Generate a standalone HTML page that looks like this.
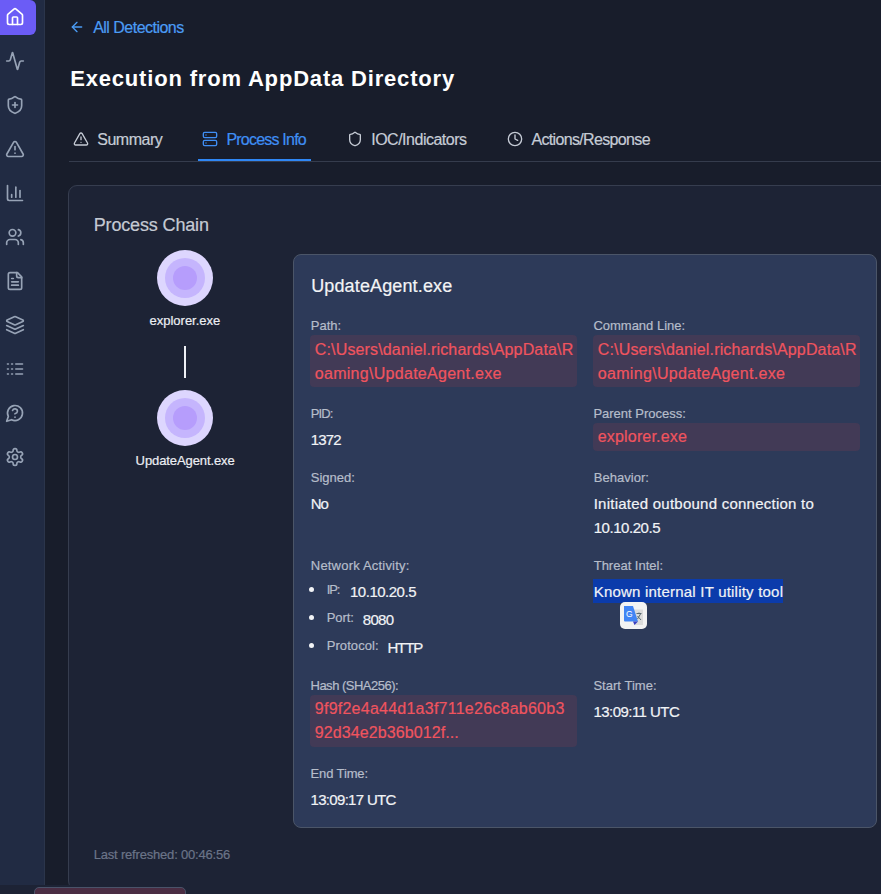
<!DOCTYPE html>
<html><head><meta charset="utf-8">
<style>
*{box-sizing:border-box;margin:0;padding:0}
html,body{width:881px;height:894px;overflow:hidden;background:#1d2335;font-family:"Liberation Sans",sans-serif}
.abs{position:absolute}
.t{position:absolute;white-space:pre;-webkit-text-stroke:0.2px currentColor}
svg.i{position:absolute;fill:none;stroke-linecap:round;stroke-linejoin:round}
#main{left:0;top:0;width:881px;height:885px;background:#181d2b}
#side{left:0;top:0;width:45px;height:885px;background:#212b43;border-right:1px solid #2b354b}
#home{left:0;top:0;width:36px;height:35px;background:#6b5cf6;border-radius:0 6px 6px 0}
svg.s{width:20px;height:20px;left:5px;stroke:#97a3b6;stroke-width:2}
#tabline{left:69px;top:161px;width:812px;height:1px;background:#353c4d}
#uline{left:198px;top:159px;width:113px;height:2px;background:#2f87f5}
#outer{left:68px;top:185px;width:840px;height:705px;background:#1d2335;border:1px solid #363d4f;border-radius:9px}
.node{position:absolute;left:157px;width:56px;height:56px;border-radius:50%;background:#ddd6fe}
.node i{position:absolute;left:8px;top:8px;width:40px;height:40px;border-radius:50%;background:#c5b5fd}
.node b{position:absolute;left:16px;top:16px;width:24px;height:24px;border-radius:50%;background:#b69dfc}
#conn{left:184px;top:346px;width:2px;height:32px;background:#eef0f5}
#inner{left:293px;top:254px;width:584px;height:574px;background:#2d3a59;border:1px solid #4b5568;border-radius:8px}
.box{position:absolute;background:#423a56;border-radius:4px}
.dot{position:absolute;left:309px;width:5px;height:5px;border-radius:50%;background:#f1f3f6}
#sel{left:593px;top:579px;width:190px;height:24px;background:#0b3bab}
#gt{left:620px;top:602px;width:27px;height:27px;background:#f3f3f3;border-radius:5px;overflow:hidden}
#strip{left:0;top:885px;width:881px;height:9px;background:#1d2335}
#toast{left:34px;top:887px;width:152px;height:20px;background:#4a2d43;border:1px solid #4a5369;border-radius:5px}
</style></head><body>
<div class="abs" id="main"></div>
<div class="abs" id="side"></div>
<div class="abs" id="home"></div>
<!-- sidebar icons -->
<svg class="i s" style="top:7px;stroke:#fff" viewBox="0 0 24 24"><path d="M15 21v-8a1 1 0 0 0-1-1h-4a1 1 0 0 0-1 1v8"/><path d="M3 10a2 2 0 0 1 .709-1.528l7-5.999a2 2 0 0 1 2.582 0l7 5.999A2 2 0 0 1 21 10v9a2 2 0 0 1-2 2H5a2 2 0 0 1-2-2z"/></svg>
<svg class="i s" style="top:51px" viewBox="0 0 24 24"><path d="M22 12h-2.48a2 2 0 0 0-1.93 1.46l-2.35 8.36a.25.25 0 0 1-.48 0L9.24 2.18a.25.25 0 0 0-.48 0l-2.350 8.36A2 2 0 0 1 4.49 12H2"/></svg>
<svg class="i s" style="top:95px" viewBox="0 0 24 24"><path d="M20 13c0 5-3.5 7.5-7.66 8.95a1 1 0 0 1-.67-.01C7.5 20.5 4 18 4 13V6a1 1 0 0 1 1-1c2 0 4.5-1.2 6.24-2.72a1.17 1.17 0 0 1 1.52 0C14.51 3.81 17 5 19 5a1 1 0 0 1 1 1z"/><path d="M9 12h6"/><path d="M12 9v6"/></svg>
<svg class="i s" style="top:139px" viewBox="0 0 24 24"><path d="m21.73 18-8-14a2 2 0 0 0-3.48 0l-8 14A2 2 0 0 0 4 21h16a2 2 0 0 0 1.73-3"/><path d="M12 9v4"/><path d="M12 17h.01"/></svg>
<svg class="i s" style="top:183px" viewBox="0 0 24 24"><path d="M3 3v16a2 2 0 0 0 2 2h16"/><path d="M18 17V9"/><path d="M13 17V5"/><path d="M8 17v-3"/></svg>
<svg class="i s" style="top:227px" viewBox="0 0 24 24"><path d="M16 21v-2a4 4 0 0 0-4-4H6a4 4 0 0 0-4 4v2"/><circle cx="9" cy="7" r="4"/><path d="M22 21v-2a4 4 0 0 0-3-3.87"/><path d="M16 3.13a4 4 0 0 1 0 7.75"/></svg>
<svg class="i s" style="top:271px" viewBox="0 0 24 24"><path d="M15 2H6a2 2 0 0 0-2 2v16a2 2 0 0 0 2 2h12a2 2 0 0 0 2-2V7Z"/><path d="M14 2v4a2 2 0 0 0 2 2h4"/><path d="M10 9H8"/><path d="M16 13H8"/><path d="M16 17H8"/></svg>
<svg class="i s" style="top:315px" viewBox="0 0 24 24"><path d="M12.83 2.18a2 2 0 0 0-1.66 0L2.6 6.08a1 1 0 0 0 0 1.83l8.58 3.91a2 2 0 0 0 1.66 0l8.58-3.9a1 1 0 0 0 0-1.83Z"/><path d="m22 17.65-9.17 4.16a2 2 0 0 1-1.66 0L2 17.65"/><path d="m22 12.65-9.170 4.16a2 2 0 0 1-1.66 0L2 12.65"/></svg>
<svg class="i s" style="top:359px" viewBox="0 0 24 24"><path d="M13 12h8"/><path d="M13 18h8"/><path d="M13 6h8"/><path d="M3 12h1"/><path d="M3 18h1"/><path d="M3 6h1"/><path d="M8 12h1"/><path d="M8 18h1"/><path d="M8 6h1"/></svg>
<svg class="i s" style="top:403px" viewBox="0 0 24 24"><path d="M7.9 20A9 9 0 1 0 4 16.1L2 22Z"/><path d="M9.09 9a3 3 0 0 1 5.83 1c0 2-3 3-3 3"/><path d="M12 17h.01"/></svg>
<svg class="i s" style="top:447px" viewBox="0 0 24 24"><path d="M12.22 2h-.44a2 2 0 0 0-2 2v.18a2 2 0 0 1-1 1.73l-.43.25a2 2 0 0 1-2 0l-.15-.08a2 2 0 0 0-2.73.73l-.22.38a2 2 0 0 0 .73 2.73l.15.1a2 2 0 0 1 1 1.72v.51a2 2 0 0 1-1 1.74l-.15.09a2 2 0 0 0-.73 2.73l.22.38a2 2 0 0 0 2.730.73l.15-.08a2 2 0 0 1 2 0l.43.25a2 2 0 0 1 1 1.73V20a2 2 0 0 0 2 2h.44a2 2 0 0 0 2-2v-.18a2 2 0 0 1 1-1.73l.43-.25a2 2 0 0 1 2 0l.15.08a2 2 0 0 0 2.73-.73l.22-.39a2 2 0 0 0-.73-2.73l-.15-.08a2 2 0 0 1-1-1.74v-.5a2 2 0 0 1 1-1.74l.15-.09a2 2 0 0 0 .73-2.73l-.22-.38a2 2 0 0 0-2.73-.73l-.15.08a2 2 0 0 1-2 0l-.43-.25a2 2 0 0 1-1-1.73V4a2 2 0 0 0-2-2z"/><circle cx="12" cy="12" r="3"/></svg>

<!-- back arrow -->
<svg class="i" style="left:69px;top:19px;width:16px;height:16px;stroke:#4b9cf5;stroke-width:2" viewBox="0 0 24 24"><path d="m12 19-7-7 7-7"/><path d="M19 12H5"/></svg>
<!-- tabs -->
<div class="abs" id="tabline"></div>
<div class="abs" id="uline"></div>
<svg class="i" style="left:73px;top:131px;width:16px;height:16px;stroke:#c6ccd6;stroke-width:2" viewBox="0 0 24 24"><path d="m21.73 18-8-14a2 2 0 0 0-3.48 0l-8 14A2 2 0 0 0 4 21h16a2 2 0 0 0 1.73-3"/><path d="M12 9v4"/><path d="M12 17h.01"/></svg>
<svg class="i" style="left:202px;top:131px;width:16px;height:16px;stroke:#3f8ff5;stroke-width:2" viewBox="0 0 24 24"><rect width="20" height="8" x="2" y="2" rx="2" ry="2"/><rect width="20" height="8" x="2" y="14" rx="2" ry="2"/><line x1="6" x2="6.01" y1="6" y2="6"/><line x1="6" x2="6.01" y1="18" y2="18"/></svg>
<svg class="i" style="left:347px;top:131px;width:16px;height:16px;stroke:#c6ccd6;stroke-width:2" viewBox="0 0 24 24"><path d="M20 13c0 5-3.5 7.5-7.66 8.95a1 1 0 0 1-.67-.01C7.5 20.5 4 18 4 13V6a1 1 0 0 1 1-1c2 0 4.5-1.2 6.24-2.72a1.17 1.17 0 0 1 1.52 0C14.51 3.81 17 5 19 5a1 1 0 0 1 1 1z"/></svg>
<svg class="i" style="left:507px;top:131px;width:16px;height:16px;stroke:#c6ccd6;stroke-width:2" viewBox="0 0 24 24"><circle cx="12" cy="12" r="10"/><polyline points="12 6 12 12 16 14"/></svg>

<div class="abs" id="outer"></div>
<div class="node" style="top:250px"><i></i><b></b></div>
<div class="abs" id="conn"></div>
<div class="node" style="top:390px"><i></i><b></b></div>

<div class="abs" id="inner"></div>
<div class="box" style="left:310px;top:335px;width:267px;height:52px"></div>
<div class="box" style="left:593px;top:335px;width:267px;height:52px"></div>
<div class="box" style="left:593px;top:423px;width:267px;height:28px"></div>
<div class="box" style="left:310px;top:695px;width:267px;height:52px"></div>
<div class="dot" style="top:587px"></div>
<div class="dot" style="top:615px"></div>
<div class="dot" style="top:643px"></div>
<div class="abs" id="sel"></div>
<div class="abs" id="gt">
  <svg width="27" height="27" viewBox="0 0 27 27" style="position:absolute;left:0;top:0">
    <rect x="14" y="7.5" width="9" height="15.5" fill="#dcdcdc"/>
    <path d="M4 4h9l5 15.5H5a1 1 0 0 1-1-1z" fill="#4285f4"/>
    <path d="M13 19.5h5l-3.5 3.5z" fill="#3a3fc2"/>
    <text x="9.4" y="15" font-family="Liberation Sans" font-size="8.5" fill="#fff" text-anchor="middle">G</text>
    <path d="M16.5 11.5h5M19 10.5v1M17.5 14l3.5 4M20.5 12l-3 5" stroke="#5b6b73" stroke-width="1" fill="none"/>
  </svg>
</div>
<div class="abs" id="strip"></div>
<div class="abs" id="toast"></div>
<div class="t" style="left:93.2px;top:19.66px;font-size:16px;line-height:16px;color:#4b9cf5;letter-spacing:-0.525px">All Detections</div>
<div class="t" style="left:70.2px;top:67.58px;font-size:22px;line-height:22px;font-weight:bold;-webkit-text-stroke:0;color:#ffffff;letter-spacing:0.820px">Execution from AppData Directory</div>
<div class="t" style="left:97.3px;top:131.56px;font-size:16px;line-height:16px;color:#c6ccd6;letter-spacing:-0.509px">Summary</div>
<div class="t" style="left:226.4px;top:131.56px;font-size:16px;line-height:16px;color:#3f8ff5;letter-spacing:-0.785px">Process Info</div>
<div class="t" style="left:371.2px;top:131.56px;font-size:16px;line-height:16px;color:#c6ccd6;letter-spacing:-0.490px">IOC/Indicators</div>
<div class="t" style="left:531.4px;top:131.56px;font-size:16px;line-height:16px;color:#c6ccd6;letter-spacing:-0.651px">Actions/Response</div>
<div class="t" style="left:93.7px;top:215.76px;font-size:18px;line-height:18px;color:#c5cad3;letter-spacing:-0.147px">Process Chain</div>
<div class="t" style="left:149.5px;top:313.90px;font-size:13px;line-height:13px;color:#eceef3;letter-spacing:-0.003px">explorer.exe</div>
<div class="t" style="left:135.6px;top:454.00px;font-size:13px;line-height:13px;color:#eceef3;letter-spacing:-0.098px">UpdateAgent.exe</div>
<div class="t" style="left:311.2px;top:276.76px;font-size:18px;line-height:18px;color:#f3f4f6;letter-spacing:0.135px">UpdateAgent.exe</div>
<div class="t" style="left:310.8px;top:319.00px;font-size:13px;line-height:13px;color:#b6bdca;letter-spacing:0.000px">Path:</div>
<div class="t" style="left:593.4px;top:319.20px;font-size:13px;line-height:13px;color:#b6bdca;letter-spacing:-0.007px">Command Line:</div>
<div class="t" style="left:310.8px;top:407.00px;font-size:13px;line-height:13px;color:#b6bdca;letter-spacing:-0.899px">PID:</div>
<div class="t" style="left:593.4px;top:407.20px;font-size:13px;line-height:13px;color:#b6bdca;letter-spacing:0.000px">Parent Process:</div>
<div class="t" style="left:310.8px;top:470.80px;font-size:13px;line-height:13px;color:#b6bdca;letter-spacing:0.000px">Signed:</div>
<div class="t" style="left:593.7px;top:470.90px;font-size:13px;line-height:13px;color:#b6bdca;letter-spacing:0.047px">Behavior:</div>
<div class="t" style="left:310.8px;top:559.20px;font-size:13px;line-height:13px;color:#b6bdca;letter-spacing:0.196px">Network Activity:</div>
<div class="t" style="left:593.7px;top:559.40px;font-size:13px;line-height:13px;color:#b6bdca;letter-spacing:0.000px">Threat Intel:</div>
<div class="t" style="left:310.5px;top:678.80px;font-size:13px;line-height:13px;color:#b6bdca;letter-spacing:-0.497px">Hash (SHA256):</div>
<div class="t" style="left:593.4px;top:679.10px;font-size:13px;line-height:13px;color:#b6bdca;letter-spacing:0.034px">Start Time:</div>
<div class="t" style="left:310.5px;top:766.70px;font-size:13px;line-height:13px;color:#b6bdca;letter-spacing:-0.116px">End Time:</div>
<div class="t" style="left:310.8px;top:432.30px;font-size:15px;line-height:15px;color:#f1f3f6;letter-spacing:-0.858px">1372</div>
<div class="t" style="left:310.8px;top:496.20px;font-size:15px;line-height:15px;color:#f1f3f6;letter-spacing:-1.087px">No</div>
<div class="t" style="left:593.7px;top:496.40px;font-size:15px;line-height:15px;color:#f1f3f6;letter-spacing:0.240px">Initiated outbound connection to</div>
<div class="t" style="left:593.7px;top:519.90px;font-size:15px;line-height:15px;color:#f1f3f6;letter-spacing:-0.456px">10.10.20.5</div>
<div class="t" style="left:593.7px;top:584.40px;font-size:15px;line-height:15px;color:#f1f3f6;letter-spacing:0.212px">Known internal IT utility tool</div>
<div class="t" style="left:593.4px;top:704.30px;font-size:15px;line-height:15px;color:#f1f3f6;letter-spacing:-0.535px">13:09:11 UTC</div>
<div class="t" style="left:310.5px;top:791.70px;font-size:15px;line-height:15px;color:#f1f3f6;letter-spacing:-0.681px">13:09:17 UTC</div>
<div class="t" style="left:326.7px;top:583.00px;font-size:13px;line-height:13px;color:#b6bdca;letter-spacing:-1.053px">IP:</div>
<div class="t" style="left:350.0px;top:584.30px;font-size:15px;line-height:15px;color:#f1f3f6;letter-spacing:-0.490px">10.10.20.5</div>
<div class="t" style="left:326.7px;top:611.00px;font-size:13px;line-height:13px;color:#b6bdca;letter-spacing:-0.042px">Port:</div>
<div class="t" style="left:362.8px;top:612.00px;font-size:15px;line-height:15px;color:#f1f3f6;letter-spacing:-0.725px">8080</div>
<div class="t" style="left:326.7px;top:639.10px;font-size:13px;line-height:13px;color:#b6bdca;letter-spacing:0.086px">Protocol:</div>
<div class="t" style="left:387.4px;top:639.80px;font-size:15px;line-height:15px;color:#f1f3f6;letter-spacing:-1.124px">HTTP</div>
<div class="t" style="left:314.8px;top:341.76px;font-size:16px;line-height:16px;color:#f0545e;letter-spacing:0.150px">C:\Users\daniel.richards\AppData\R</div>
<div class="t" style="left:314.8px;top:365.76px;font-size:16px;line-height:16px;color:#f0545e;letter-spacing:0.287px">oaming\UpdateAgent.exe</div>
<div class="t" style="left:597.8px;top:341.76px;font-size:16px;line-height:16px;color:#f0545e;letter-spacing:0.159px">C:\Users\daniel.richards\AppData\R</div>
<div class="t" style="left:597.8px;top:365.56px;font-size:16px;line-height:16px;color:#f0545e;letter-spacing:0.315px">oaming\UpdateAgent.exe</div>
<div class="t" style="left:597.8px;top:429.16px;font-size:16px;line-height:16px;color:#f0545e;letter-spacing:0.166px">explorer.exe</div>
<div class="t" style="left:314.8px;top:700.96px;font-size:16px;line-height:16px;color:#f0545e;letter-spacing:0.246px">9f9f2e4a44d1a3f711e26c8ab60b3</div>
<div class="t" style="left:314.8px;top:724.96px;font-size:16px;line-height:16px;color:#f0545e;letter-spacing:0.091px">92d34e2b36b012f...</div>
<div class="t" style="left:93.7px;top:848.10px;font-size:13px;line-height:13px;color:#6b7488;letter-spacing:-0.189px">Last refreshed: 00:46:56</div>
</body></html>
